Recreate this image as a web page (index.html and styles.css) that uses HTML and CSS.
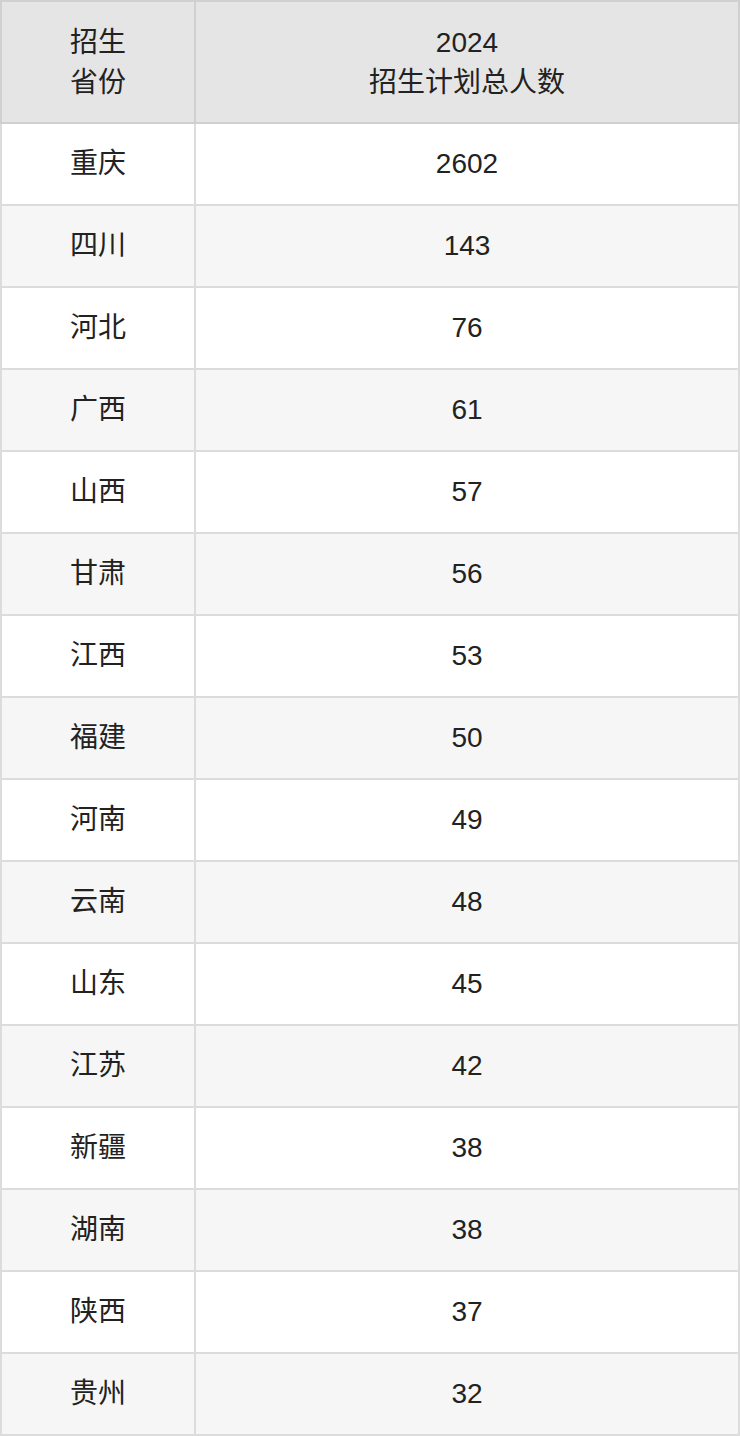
FILE: index.html
```
<!DOCTYPE html>
<html lang="zh-CN">
<head>
<meta charset="utf-8">
<link rel="stylesheet" href="styles.css">
</head>
<body>
<table class="plan">
  <colgroup><col class="c1"><col class="c2"></colgroup>
  <thead>
    <tr><th>招生<br>省份</th><th>2024<br>招生计划总人数</th></tr>
  </thead>
  <tbody>
    <tr><td>重庆</td><td>2602</td></tr>
    <tr><td>四川</td><td>143</td></tr>
    <tr><td>河北</td><td>76</td></tr>
    <tr><td>广西</td><td>61</td></tr>
    <tr><td>山西</td><td>57</td></tr>
    <tr><td>甘肃</td><td>56</td></tr>
    <tr><td>江西</td><td>53</td></tr>
    <tr><td>福建</td><td>50</td></tr>
    <tr><td>河南</td><td>49</td></tr>
    <tr><td>云南</td><td>48</td></tr>
    <tr><td>山东</td><td>45</td></tr>
    <tr><td>江苏</td><td>42</td></tr>
    <tr><td>新疆</td><td>38</td></tr>
    <tr><td>湖南</td><td>38</td></tr>
    <tr><td>陕西</td><td>37</td></tr>
    <tr><td>贵州</td><td>32</td></tr>
  </tbody>
</table>
</body>
</html>
```
FILE: styles.css
```
html, body {
  margin: 0;
  padding: 0;
  background: #fff;
}
.plan {
  width: 740px;
  border-collapse: collapse;
  table-layout: fixed;
  font-family: "Liberation Sans", "Noto Sans CJK SC", sans-serif;
  font-size: 28px;
  color: #222;
}
.plan .c1 { width: 194px; }
.plan th, .plan td {
  border: 2px solid #dcdcdc;
  text-align: center;
  vertical-align: middle;
  padding: 0;
  font-weight: normal;
}
.plan th {
  background: #e5e5e5;
  border-color: #d0d0d0;
  height: 118px;
  line-height: 40px;
  padding-top: 2px;
}
.plan td {
  height: 80px;
  line-height: 40px;
}
.plan tbody tr:nth-child(even) td {
  background: #f6f6f6;
}
```
